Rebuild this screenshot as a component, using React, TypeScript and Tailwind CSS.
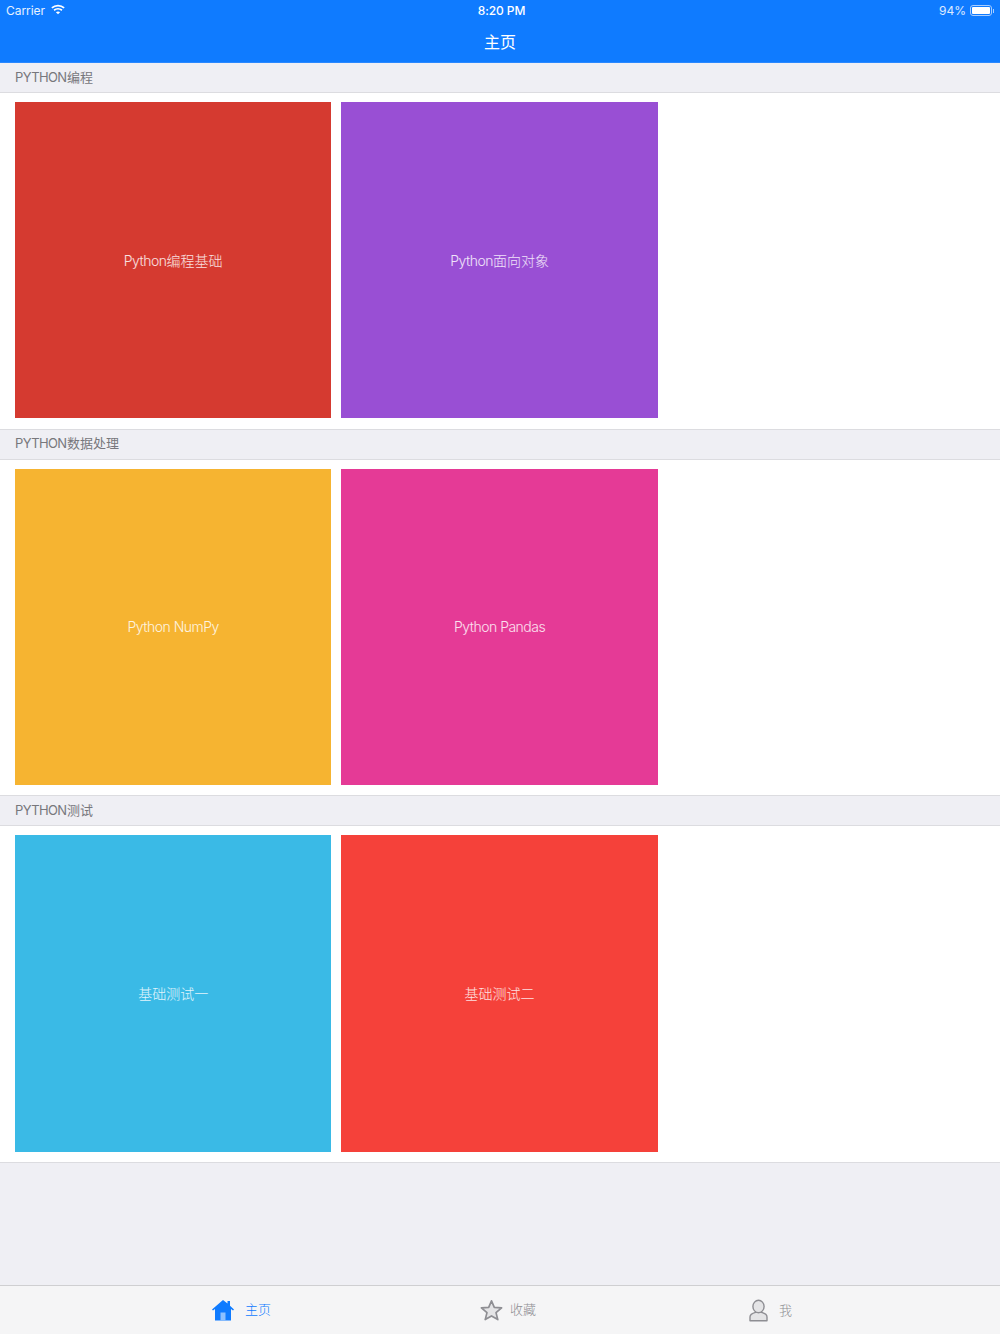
import React from "react";

const font = { fontFamily: '"Inter", "Noto Sans CJK SC", sans-serif' };

function Wifi() {
  return (
    <svg width="14" height="11" viewBox="0 0 16 12" fill="none" stroke="white" strokeWidth="2" className="ml-[6px] mb-[2px]">
      <path d="M1 4.2 C5 0.6 11 0.6 15 4.2" />
      <path d="M3.5 6.8 C6 4.8 10 4.8 12.5 6.8" />
      <path d="M8 11.5 L5.6 9 C7 8 9 8 10.4 9 Z" fill="white" stroke="none" />
    </svg>
  );
}

function Battery() {
  return (
    <div className="flex items-center ml-[4px]">
      <div className="w-[22px] h-[11px] rounded-[3px] border border-[#a8cdff] p-[1px]">
        <div className="w-[18px] h-full bg-white rounded-[1px]" />
      </div>
      <div className="w-[1px] h-[4px] bg-[#a8cdff] ml-[1px]" />
    </div>
  );
}

function Section({ latin, cjk, tiles }: { latin: string; cjk: string; tiles: { latin: string; cjk: string; cls: string }[] }) {
  return (
    <section>
      <div className="h-[30px] bg-[#efeff4] border-b border-[#dcdce0] pl-[15px] flex items-center text-[13px] text-[#77777c]">
        <span className="tracking-[-0.6px] mr-[0.5px]">{latin}</span>
        <span>{cjk}</span>
      </div>
      <div className="bg-white border-b border-[#dcdce0] h-[336.67px] pt-[9px] pl-[15px] flex gap-[10px]">
        {tiles.map((t) => (
          <div
            key={t.latin + t.cjk}
            className={`w-[316.4px] h-[316.4px] flex items-center justify-center text-white/85 text-[14px] font-light ${t.cls}`}
          >
            <span className="tracking-[-0.5px]">{t.latin}</span>
            <span>{t.cjk}</span>
          </div>
        ))}
      </div>
    </section>
  );
}

function Tab({ icon, label, active, cls }: { icon: React.ReactNode; label: string; active?: boolean; cls: string }) {
  return (
    <div className={`absolute top-[13px] flex items-center ${cls}`}>
      {icon}
      <span className={`text-[13px] font-light ${active ? "text-[#0f7bff]" : "text-[#8e8e93]"}`}>{label}</span>
    </div>
  );
}

export default function App() {
  return (
    <div style={font} className="w-[1000px] h-[1334px] bg-[#efeff4] flex flex-col overflow-hidden">
      <header className="h-[63px] bg-[#0f7bff] text-white border-b border-[#2a88ff] shrink-0">
        <div className="h-[21px] flex items-center justify-between pl-[6px] pr-[6px] text-[12px] relative">
          <div className="flex items-center text-white/90 tracking-[-0.05px]">
            <span>Carrier</span>
            <Wifi />
          </div>
          <span className="absolute left-0 right-0 text-center font-medium pl-[3px] tracking-[-0.1px]">8:20 PM</span>
          <div className="flex items-center text-white/85">
            <span>94%</span>
            <Battery />
          </div>
        </div>
        <div className="h-[41px] flex items-center justify-center text-[16px]">主页</div>
      </header>

      <Section
        latin="PYTHON"
        cjk="编程"
        tiles={[
          { latin: "Python", cjk: "编程基础", cls: "bg-[#d53a30]" },
          { latin: "Python", cjk: "面向对象", cls: "bg-[#994fd4]" },
        ]}
      />
      <Section
        latin="PYTHON"
        cjk="数据处理"
        tiles={[
          { latin: "Python NumPy", cjk: "", cls: "bg-[#f6b431]" },
          { latin: "Python Pandas", cjk: "", cls: "bg-[#e53a96]" },
        ]}
      />
      <Section
        latin="PYTHON"
        cjk="测试"
        tiles={[
          { latin: "", cjk: "基础测试一", cls: "bg-[#3abae6]" },
          { latin: "", cjk: "基础测试二", cls: "bg-[#f5413a]" },
        ]}
      />

      <div className="flex-1" />

      <footer className="h-[49px] relative bg-[#f5f5f6] border-t border-[#cfcfd1] shrink-0">
        <Tab
          cls="left-[212px]"
          active
          label="主页"
          icon={
            <svg width="22" height="22" viewBox="0 0 22 22" className="mr-[11px]">
              <path d="M11 1 L15.5 4.6 V2 H18 V6.8 L22 10.4 L21 11.4 L19 10 V21.5 H3 V10 L1 11.4 L0 10.4 Z" fill="#0f7bff" />
              <rect x="8.5" y="13.5" width="5" height="8" fill="#8cc0ff" />
            </svg>
          }
        />
        <Tab
          cls="left-[480px]"
          label="收藏"
          icon={
            <svg width="23" height="22" viewBox="0 0 23 22" className="mr-[7px]">
              <path
                d="M11.5 1.8 L14.3 8.3 L21.6 8.9 L16 13.6 L17.8 20.6 L11.5 16.9 L5.2 20.6 L7 13.6 L1.4 8.9 L8.7 8.3 Z"
                fill="#e4e4e6"
                stroke="#8e8e93"
                strokeWidth="1.7"
                strokeLinejoin="round"
              />
            </svg>
          }
        />
        <Tab
          cls="left-[749px]"
          label="我"
          icon={
            <svg width="19" height="23" viewBox="0 0 19 23" className="mr-[11px]">
              <path
                d="M1 21.8 V18 C1 15.5 3.5 14.2 6.5 13.4 H12.5 C15.5 14.2 18 15.5 18 18 V21.8 Z"
                fill="#e4e4e6"
                stroke="#8e8e93"
                strokeWidth="1.4"
                strokeLinejoin="round"
              />
              <ellipse cx="9.5" cy="7.5" rx="5.6" ry="6.2" fill="#e4e4e6" stroke="#8e8e93" strokeWidth="1.4" />
            </svg>
          }
        />
      </footer>
    </div>
  );
}
